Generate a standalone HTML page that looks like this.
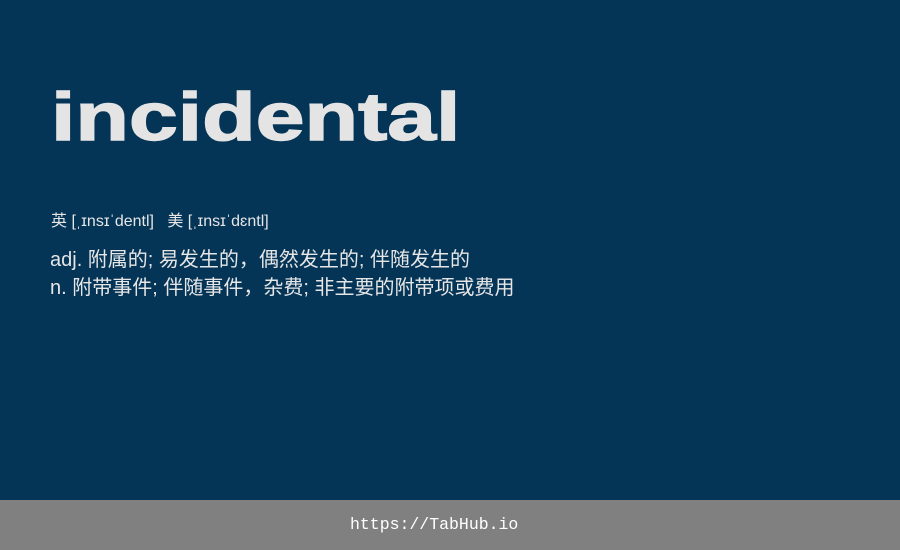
<!DOCTYPE html>
<html><head><meta charset="utf-8"><style>
body{margin:0;width:900px;height:550px;background:#043456;position:relative;overflow:hidden;font-family:"Liberation Sans","Noto Sans CJK SC",sans-serif;color:#e6e6e6}
.w{position:absolute;left:51px;top:67px;font-size:68px;font-weight:bold;line-height:100px;color:#e4e4e4;transform:scaleX(1.29);transform-origin:left top;-webkit-text-stroke:1.4px #e4e4e4}
.p{position:absolute;left:51px;top:212px;font-size:16px;line-height:20px}
.d{position:absolute;left:50px;top:246px;font-size:20px;line-height:28px}
.f{position:absolute;left:0;top:500px;width:900px;height:50px;background:#808080;color:#fff;font-family:"Liberation Mono",monospace;font-size:16.5px;line-height:50px}
.f span{position:absolute;left:350px}
</style></head><body>
<div class="w">incidental</div>
<div class="p">英 [ˌɪnsɪˈdentl] &nbsp; 美 [ˌɪnsɪˈdɛntl]</div>
<div class="d">adj. 附属的; 易发生的，偶然发生的; 伴随发生的<br>n. 附带事件; 伴随事件，杂费; 非主要的附带项或费用</div>
<div class="f"><span>https://TabHub.io</span></div>
</body></html>
